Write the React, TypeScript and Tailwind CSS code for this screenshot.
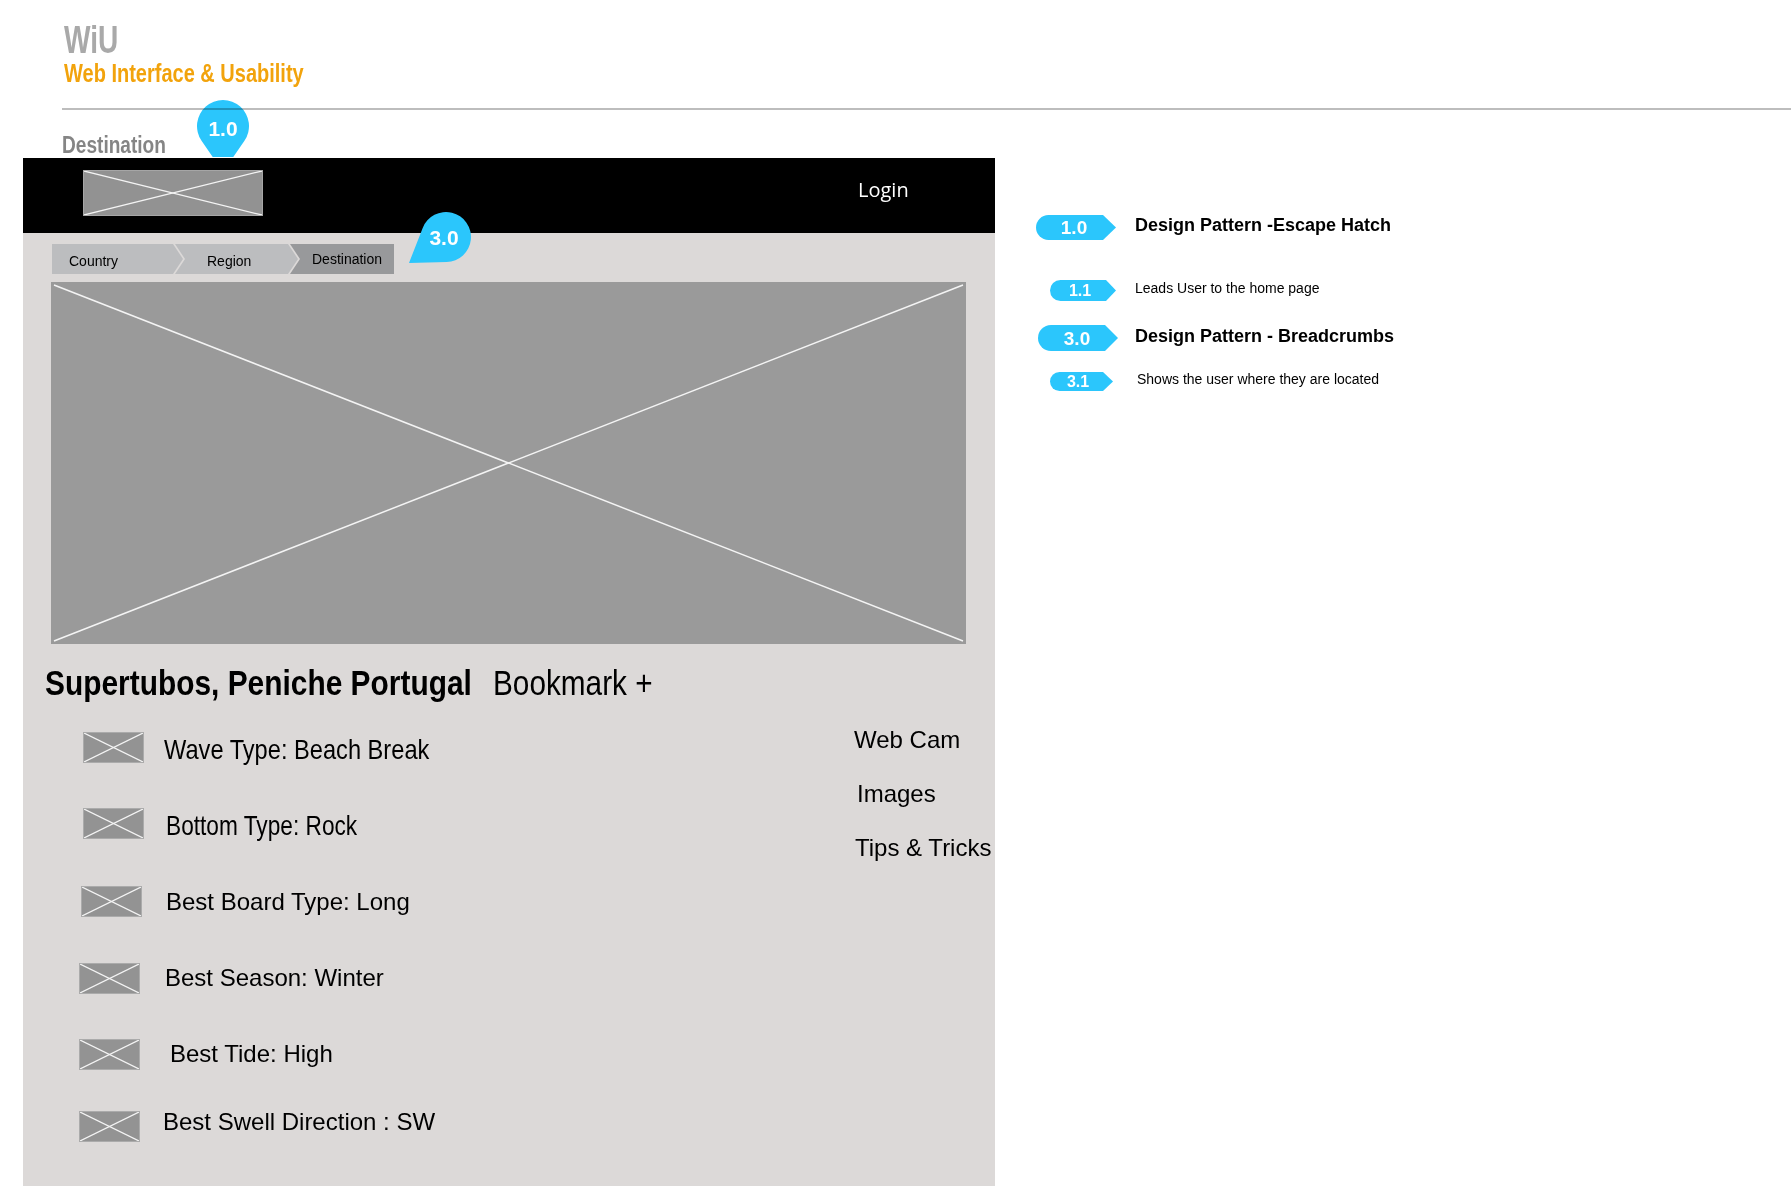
import React from 'react';

// Wireframe: WiU - Destination page with design-pattern legend

interface PlaceholderProps {
  className: string;
  w: number;
  h: number;
  inset?: number;
  stroke?: number;
}

// Caixa cinza com um X branco (imagem de wireframe)
function Placeholder({ className, w, h, inset = 0, stroke = 1 }: PlaceholderProps) {
  return (
    <div className={`relative shrink-0 ${className}`}>
      <svg
        className="absolute inset-0 h-full w-full"
        viewBox={`0 0 ${w} ${h}`}
        preserveAspectRatio="none"
      >
        <line x1={inset} y1={inset} x2={w - inset} y2={h - inset} stroke="#f4f4f4" strokeWidth={stroke} />
        <line x1={inset} y1={h - inset} x2={w - inset} y2={inset} stroke="#f4f4f4" strokeWidth={stroke} />
      </svg>
    </div>
  );
}

function Badge({ className, label }: { className: string; label: string }) {
  return (
    <div
      className={`flex shrink-0 items-center justify-center rounded-l-full bg-[#2bc6fc] font-bold leading-none text-white ${className}`}
    >
      {label}
    </div>
  );
}

const FEATURES = [
  { label: 'Wave Type: Beach Break', row: '', icon: 'ml-[60px] -mt-[5px]', text: 'ml-[20px]', condensed: 'scale-x-[0.844]' },
  { label: 'Bottom Type: Rock', row: '', icon: 'ml-[60px] -mt-[5px]', text: 'ml-[22px]', condensed: 'scale-x-[0.81]' },
  { label: 'Best Board Type: Long', row: '', icon: 'ml-[58px] -mt-[2px]', text: 'ml-[24px]', condensed: '' },
  { label: 'Best Season: Winter', row: '', icon: 'ml-[56px]', text: 'ml-[25px]', condensed: '' },
  { label: 'Best Tide: High', row: '', icon: 'ml-[56px]', text: 'ml-[30px]', condensed: '' },
  { label: 'Best Swell Direction : SW', row: '-mt-[8px]', icon: 'ml-[56px] mt-[8px]', text: 'ml-[23px]', condensed: '' },
];

const LINKS = [
  { label: 'Web Cam', cls: 'ml-0' },
  { label: 'Images', cls: 'ml-[3px]' },
  { label: 'Tips & Tricks', cls: 'ml-[1px]' },
];

export default function App() {
  return (
    <div className="relative h-[1186px] w-[1791px] overflow-hidden bg-white [font-family:'Liberation_Sans',Arial,sans-serif]">
      {/* Cabeçalho */}
      <div className="pl-[64px] pt-[20px]">
        <div className="h-[39px] whitespace-nowrap text-[39px] font-bold leading-none text-[#a9a9a9]">
          <span className="inline-block origin-left scale-x-[0.72]">WiU</span>
        </div>
        <div className="mt-[2px] h-[25px] whitespace-nowrap text-[25px] font-bold leading-none text-[#f2a30c]">
          <span className="inline-block origin-left scale-x-[0.8]">Web Interface &amp; Usability</span>
        </div>
      </div>
      <div className="relative z-10 ml-[62px] mt-[22px] h-[2px] bg-[#bdbdbd] mix-blend-multiply" />

      <div className="ml-[62px] mt-[24px] h-[23px] whitespace-nowrap text-[23px] font-bold leading-none text-[#858585]">
        <span className="inline-block origin-left scale-x-[0.83]">Destination</span>
      </div>

      {/* Pino 1.0 */}
      <div className="absolute left-[197px] top-[100px] h-[57px] w-[52px]">
        <svg className="absolute inset-0" width="52" height="57" viewBox="0 0 52 57">
          <path d="M 4.54 40.69 A 26 26 0 1 1 47.46 40.69 L 26 72 Z" fill="#2bc6fc" />
        </svg>
        <span className="absolute left-0 top-0 flex h-[52px] w-[52px] items-center justify-center pt-[4px] text-[21px] font-bold leading-none text-white">
          1.0
        </span>
      </div>

      <div className="mt-[1px] flex items-start">
        {/* Painel da página */}
        <div className="ml-[23px] h-[1028px] w-[972px] shrink-0 bg-[#dcd9d8]">
          <div className="flex h-[75px] items-start bg-black">
            <Placeholder className="ml-[60px] mt-[12px] h-[46px] w-[180px] border border-[#a6a6a6] bg-[#929292]" w={180} h={46} stroke={1.3} />
            <span className="ml-[595px] mt-[22px] text-[20px] leading-none text-white [font-family:'Open_Sans',sans-serif]">
              Login
            </span>
          </div>

          {/* Breadcrumbs */}
          <div className="ml-[29px] mt-[11px] flex h-[30px] text-[14px] leading-none text-black">
            <div className="flex w-[131px] items-center bg-[#bcbdbf] pl-[17px] pt-[3px] [clip-path:polygon(0_0,calc(100%-10px)_0,100%_50%,calc(100%-10px)_100%,0_100%)]">
              Country
            </div>
            <div className="-ml-[8px] flex w-[123px] items-center bg-[#bcbdbf] pl-[32px] pt-[3px] [clip-path:polygon(0_0,calc(100%-10px)_0,100%_50%,calc(100%-10px)_100%,0_100%,10px_50%)]">
              Region
            </div>
            <div className="-ml-[8px] flex w-[104px] items-center bg-[#98999b] pl-[22px] [clip-path:polygon(0_0,100%_0,100%_100%,0_100%,10px_50%)]">
              Destination
            </div>
          </div>

          <Placeholder className="ml-[28px] mt-[8px] h-[362px] w-[915px] bg-[#9a9a9a]" w={915} h={362} inset={3} stroke={1.5} />

          {/* Título */}
          <div className="ml-[22px] mt-[21px] flex h-[35px] items-start leading-none text-black">
            <div className="w-[448px] whitespace-nowrap text-[35px] font-bold">
              <span className="inline-block origin-left scale-x-[0.854]">Supertubos, Peniche Portugal</span>
            </div>
            <div className="whitespace-nowrap text-[35px]">
              <span className="inline-block origin-left scale-x-[0.85]">Bookmark +</span>
            </div>
          </div>

          <div className="flex">
            {/* Características */}
            <div className="w-[831px] shrink-0 pt-[12px]">
              {FEATURES.map((f) => (
                <div key={f.label} className={`flex h-[76px] items-center ${f.row}`}>
                  <Placeholder className={`h-[31px] w-[61px] border border-[#ababab] bg-[#939393] ${f.icon}`} w={61} h={31} stroke={1.3} />
                  {f.condensed ? (
                    <div className={`whitespace-nowrap text-[28px] leading-none text-black ${f.text}`}>
                      <span className={`inline-block origin-left ${f.condensed}`}>{f.label}</span>
                    </div>
                  ) : (
                    <div className={`whitespace-nowrap text-[24px] leading-none text-black ${f.text}`}>{f.label}</div>
                  )}
                </div>
              ))}
            </div>

            {/* Links */}
            <div className="flex flex-col gap-[30px] pt-[28px] text-[24px] leading-none text-black">
              {LINKS.map((l) => (
                <div key={l.label} className={`h-[24px] whitespace-nowrap ${l.cls}`}>
                  {l.label}
                </div>
              ))}
            </div>
          </div>
        </div>

        {/* Legenda */}
        <div className="ml-[41px] flex flex-col pt-[57px] text-black">
          <div className="flex h-[25px] items-center">
            <Badge
              className="h-[25px] w-[80px] pr-[4px] text-[19px] [clip-path:polygon(0_0,calc(100%-13px)_0,100%_50%,calc(100%-13px)_100%,0_100%)]"
              label="1.0"
            />
            <span className="mb-[6px] ml-[19px] whitespace-nowrap text-[18px] font-bold leading-none">
              Design Pattern -Escape Hatch
            </span>
          </div>
          <div className="mt-[40px] flex h-[21px] items-center">
            <Badge
              className="ml-[14px] h-[21px] w-[66px] pr-[6px] text-[16px] [clip-path:polygon(0_0,calc(100%-10px)_0,100%_50%,calc(100%-10px)_100%,0_100%)]"
              label="1.1"
            />
            <span className="mb-[5px] ml-[19px] whitespace-nowrap text-[14px] leading-none">Leads User to the home page</span>
          </div>
          <div className="mt-[24px] flex h-[26px] items-center">
            <Badge
              className="ml-[2px] h-[26px] w-[80px] pr-[2px] text-[19px] [clip-path:polygon(0_0,calc(100%-13px)_0,100%_50%,calc(100%-13px)_100%,0_100%)]"
              label="3.0"
            />
            <span className="mb-[4px] ml-[17px] whitespace-nowrap text-[18px] font-bold leading-none">
              Design Pattern - Breadcrumbs
            </span>
          </div>
          <div className="mt-[21px] flex h-[19px] items-center">
            <Badge
              className="ml-[14px] h-[19px] w-[63px] pr-[7px] text-[16px] [clip-path:polygon(0_0,calc(100%-10px)_0,100%_50%,calc(100%-10px)_100%,0_100%)]"
              label="3.1"
            />
            <span className="mb-[5px] ml-[24px] whitespace-nowrap text-[14px] leading-none">
              Shows the user where they are located
            </span>
          </div>
        </div>
      </div>

      {/* Pino 3.0 */}
      <div className="absolute left-[405px] top-[210px] h-[56px] w-[70px]">
        <svg className="absolute inset-0" width="70" height="56" viewBox="0 0 70 56">
          <path d="M 17.7 17.9 A 25 25 0 1 1 41.65 52 L 4 53 Z" fill="#2bc6fc" />
        </svg>
        <span className="absolute left-[14px] top-[2px] flex h-[50px] w-[50px] items-center justify-center text-[21px] font-bold leading-none text-white">
          3.0
        </span>
      </div>
    </div>
  );
}
